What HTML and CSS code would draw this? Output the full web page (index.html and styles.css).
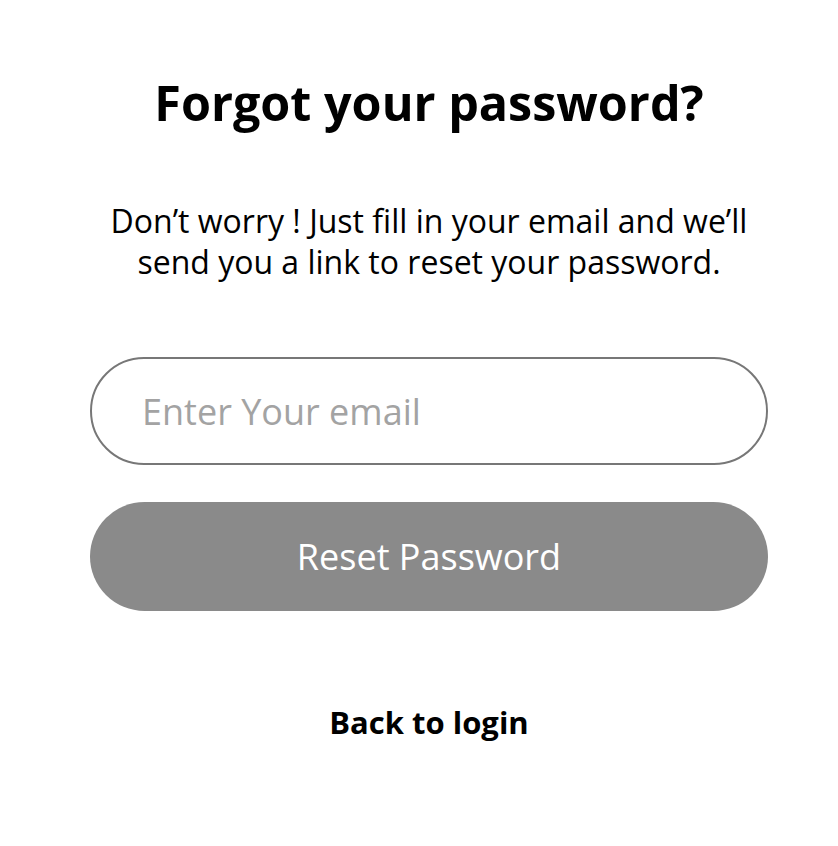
FILE: index.html
```html
<!DOCTYPE html>
<html lang="en">
<head>
  <meta charset="UTF-8" />
  <meta name="viewport" content="width=device-width, initial-scale=1.0"/>
  <title>Forgot your password?</title>
  <link rel="stylesheet" href="styles.css">
</head>
<body>
  <div class="container">
    <h1 class="title">Forgot your password?</h1>
    <p class="lead">Don’t worry ! Just fill in your email and we’ll send you a link to reset your password.</p>

    <form class="reset-form" onsubmit="return false">
      <input type="email" class="email" placeholder="Enter Your email" />
      <button type="submit" class="reset-btn">Reset Password</button>
    </form>

    <a href="#" class="back">Back to login</a>
  </div>
</body>
</html>
```

FILE: styles.css
```css
body {
  background: #fff;
  color: #000;
  font-family: "Open Sans", "Noto Sans", sans-serif;
  margin: 0;
  padding: 0 0 0 20px;
}

.container {
  width: 678px;
  margin: 0 auto;
  text-align: center;
}

.title {
  font-size: 48.5px;
  font-weight: 700;
  margin: 0;
  padding-top: 70px;
  line-height: 64px;
}

.lead {
  font-size: 32px;
  line-height: 41px;
  margin: 66px 0 0;
}

.reset-form {
  display: flex;
  flex-direction: column;
  gap: 37px;
  margin-top: 75px;
}

.email {
  height: 108px;
  border: 2px solid #777;
  border-radius: 54px;
  padding: 0 50px;
  font-family: inherit;
  font-size: 36px;
  color: #333;
  outline: none;
  box-sizing: border-box;
}

.email::placeholder {
  color: #a3a3a3;
}

.reset-btn {
  height: 109px;
  border: none;
  border-radius: 55px;
  background: #8a8a8a;
  color: #fff;
  font-family: inherit;
  font-size: 36px;
  cursor: pointer;
}

.back {
  display: block;
  width: max-content;
  margin: 90px auto 0;
  font-size: 31px;
  font-weight: 700;
  color: #000;
  text-decoration: none;
}
```
